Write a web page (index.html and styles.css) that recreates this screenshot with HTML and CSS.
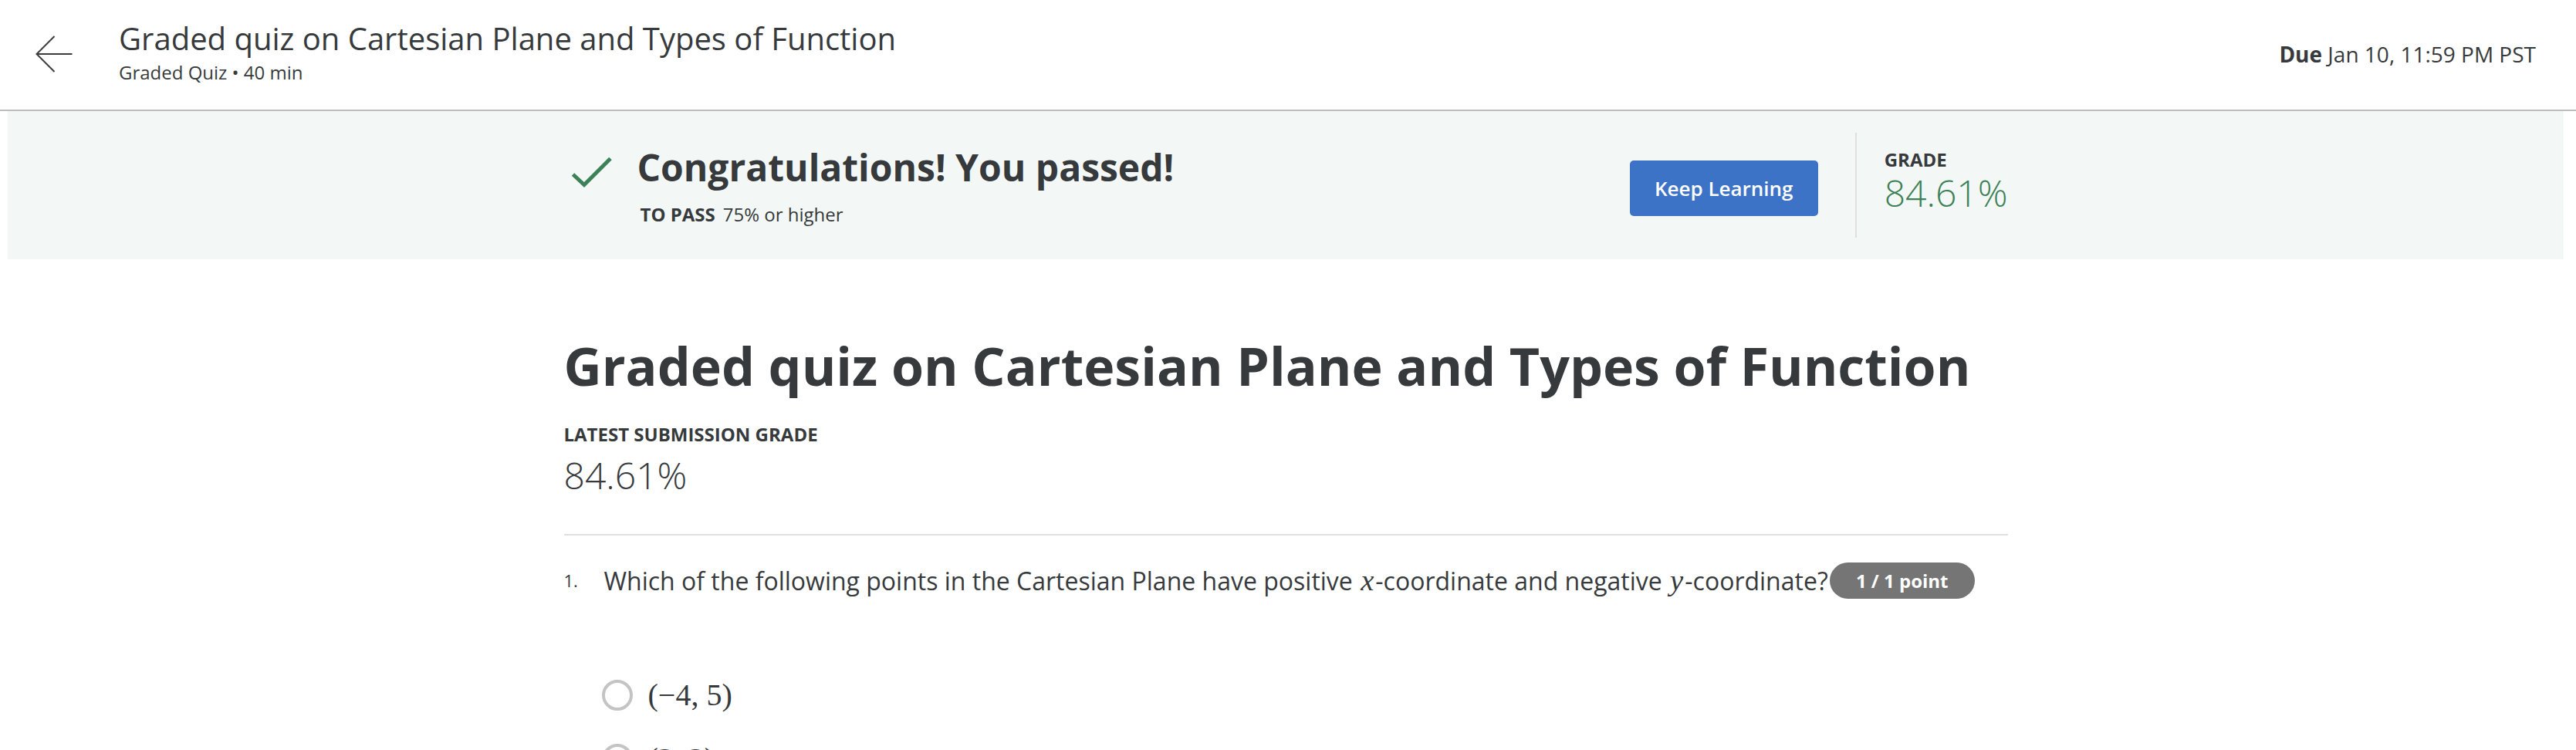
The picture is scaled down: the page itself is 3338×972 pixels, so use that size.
FILE: index.html
```html
<!DOCTYPE html>
<html lang="en">
<head>
<meta charset="utf-8">
<title>Graded quiz on Cartesian Plane and Types of Function</title>
<link rel="stylesheet" href="styles.css">
</head>
<body>
<header class="topbar">
  <a class="back" href="#" aria-label="Back">
    <svg width="48" height="48" viewBox="0 0 48 48"><path d="M24.5 1 L1.5 24 L24.5 47 M1.5 24 H47.5" fill="none" stroke="#3c3c3c" stroke-width="2"/></svg>
  </a>
  <div class="topbar-text">
    <div class="topbar-title">Graded quiz on Cartesian Plane and Types of Function</div>
    <div class="topbar-sub">Graded Quiz • 40 min</div>
  </div>
  <div class="due"><b>Due</b> Jan 10, 11:59 PM PST</div>
</header>

<div class="page">
  <section class="banner">
    <div class="wrap banner-inner">
      <div class="pass">
        <svg class="check" width="64" height="48" viewBox="0 0 64 48"><polyline points="11.5,27 26,40.5 60,6.5" fill="none" stroke="#3d8157" stroke-width="5"/></svg>
        <div class="pass-text">
          <div class="pass-title">Congratulations! You passed!</div>
          <div class="pass-sub"><b>TO PASS</b>75% or higher</div>
        </div>
      </div>
      <div class="result">
        <a class="btn" href="#">Keep Learning</a>
        <div class="divider"></div>
        <div class="grade">
          <div class="grade-label">GRADE</div>
          <div class="grade-value">84.61%</div>
        </div>
      </div>
    </div>
  </section>

  <main class="wrap main">
    <h1 class="quiz-title">Graded quiz on Cartesian Plane and Types of Function</h1>
    <div class="label">LATEST SUBMISSION GRADE</div>
    <div class="score">84.61%</div>
    <div class="rule"></div>

    <div class="question">
      <div class="qnum">1.</div>
      <div class="qtext">Which of the following points in the Cartesian Plane have positive <span class="math">x</span>-coordinate and negative <span class="math">y</span>-coordinate?</div>
      <div class="badge">1 / 1 point</div>
    </div>

    <div class="options">
      <div class="option"><span class="radio"></span><span class="opt-math">(−4, 5)</span></div>
      <div class="option"><span class="radio"></span><span class="opt-math">(3, 2)</span></div>
    </div>
  </main>
</div>
</body>
</html>
```
FILE: styles.css
```css
body {
  margin: 0;
  font-family: "Open Sans", "Noto Sans", sans-serif;
  color: #373a3c;
  background: #ffffff;
}

/* top bar */
.topbar {
  display: flex;
  align-items: flex-start;
  height: 142px;
  border-bottom: 2px solid #bdbdbd;
  padding: 0 52px 0 46px;
}
.back {
  display: block;
  width: 48px;
  height: 48px;
  margin-top: 46px;
}
.back svg { display: block; }
.topbar-text {
  margin-left: 60px;
  margin-top: 24px;
}
.topbar-title {
  font-size: 40px;
  line-height: 52px;
}
.topbar-sub {
  margin-top: 2px;
  font-size: 24px;
  line-height: 32px;
}
.due {
  margin-left: auto;
  margin-top: 50px;
  font-size: 28px;
  line-height: 40px;
}
.due b { font-weight: 700; }

/* page */
.page {
  margin: 0 16px 0 10px;
}
.wrap {
  width: 1871px;
  margin: 0 auto;
}

/* banner */
.banner {
  display: flex;
  height: 192px;
  background: #f3f8f6;
}
.banner-inner {
  display: flex;
  align-items: center;
  justify-content: space-between;
}
.pass {
  display: flex;
  align-items: flex-start;
}
.check {
  display: block;
  margin-top: 12px;
  margin-right: 31px;
}
.pass-title {
  font-size: 48px;
  font-weight: 700;
  line-height: 60px;
}
.pass-sub {
  margin-top: 15px;
  padding-left: 4px;
  font-size: 24px;
  line-height: 32px;
}
.pass-sub b {
  font-weight: 700;
  margin-right: 10px;
}
.result {
  display: flex;
  align-items: center;
}
.btn {
  display: flex;
  align-items: center;
  justify-content: center;
  width: 244px;
  height: 72px;
  margin-top: 8px;
  border-radius: 5px;
  background: #3d73c6;
  color: #ffffff;
  font-size: 26px;
  font-weight: 600;
  text-decoration: none;
}
.divider {
  width: 2px;
  height: 136px;
  margin: 0 36px 0 48px;
  background: #e0e0e0;
}
.grade { margin-bottom: 13px; }
.grade-label {
  font-size: 24px;
  font-weight: 700;
  line-height: 32px;
}
.grade-value {
  font-size: 48px;
  font-weight: 300;
  line-height: 54px;
  color: #3d8157;
}

/* main */
.main { margin-top: 95px; }
.quiz-title {
  margin: 0;
  font-size: 68px;
  font-weight: 700;
  line-height: 85px;
}
.label {
  margin-top: 31px;
  font-size: 24px;
  font-weight: 700;
  line-height: 32px;
}
.score {
  margin-top: 7px;
  font-size: 48px;
  font-weight: 300;
  line-height: 60px;
}
.rule {
  height: 2px;
  margin-top: 46px;
  background: #e0e0e0;
}
.question {
  display: flex;
  align-items: flex-start;
  margin-top: 35px;
}
.qnum {
  width: 52px;
  flex: none;
  margin-top: 7px;
  font-size: 22px;
  line-height: 32px;
}
.qtext {
  font-size: 32px;
  line-height: 48px;
}
.math {
  padding: 0 2px;
  font-family: "Liberation Serif", "DejaVu Serif", serif;
  font-style: italic;
  font-size: 1.21em;
  line-height: 1;
}
.badge {
  display: flex;
  align-items: center;
  justify-content: center;
  flex: none;
  width: 188px;
  height: 47px;
  margin-left: 2px;
  border-radius: 24px;
  background: #757575;
  color: #ffffff;
  font-size: 24px;
  font-weight: 700;
}
.options {
  display: flex;
  flex-direction: column;
  gap: 35px;
  margin-top: 100px;
  padding-left: 49px;
}
.option {
  display: flex;
  align-items: center;
  height: 48px;
}
.radio {
  width: 40px;
  height: 40px;
  box-sizing: border-box;
  margin-right: 20px;
  border: 4px solid #c4c4c4;
  border-radius: 50%;
}
.opt-math {
  font-family: "Liberation Serif", "DejaVu Serif", serif;
  font-size: 40px;
  line-height: 44px;
}
```
